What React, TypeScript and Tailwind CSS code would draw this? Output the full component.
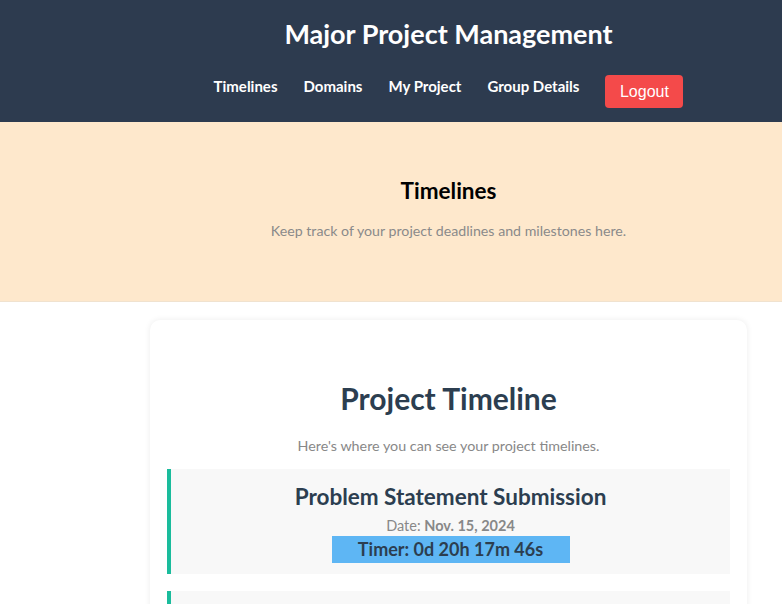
export default function App() {
  const font = { fontFamily: 'Lato, "Noto Sans", sans-serif' };
  return (
    <div className="w-[782px] h-[604px] overflow-hidden bg-white" style={font}>
      <div className="w-[897px]">
        <header className="bg-[#2d3b4f] h-[122px] flex flex-col items-center">
          <h1 className="text-[27px] font-bold text-white leading-none mt-[20px]">Major Project Management</h1>
          <nav className="flex items-center mt-[18px]">
            <a className="text-[15px] font-bold text-white mr-[26px]">Timelines</a>
            <a className="text-[15px] font-bold text-white mr-[26px]">Domains</a>
            <a className="text-[15px] font-bold text-white mr-[26px]">My Project</a>
            <a className="text-[15px] font-bold text-white mr-[26px]">Group Details</a>
            <button className="bg-[#f44a4a] text-white text-[16px] w-[78px] h-[33px] rounded-[4px] mt-[10px]" style={{ fontFamily: '"Liberation Sans", Arial, sans-serif' }}>Logout</button>
          </nav>
        </header>
        <section className="bg-[#fee8cc] h-[180px] flex flex-col items-center border-b border-[#f0e2cf]">
          <h2 className="text-[22.5px] font-bold text-black mt-[58px] leading-none">Timelines</h2>
          <p className="text-[14.2px] text-[#8a8a8a] mt-[17px]">Keep track of your project deadlines and milestones here.</p>
        </section>
        <main className="flex justify-center pt-[18px]">
          <div className="w-[597px] bg-white rounded-[10px] shadow-[0_0_6px_rgba(0,0,0,0.08)] px-[17px] pt-[63px] pb-[20px] flex flex-col items-center">
            <h2 className="text-[30px] font-bold text-[#2c3e50] leading-none">Project Timeline</h2>
            <p className="text-[14.3px] text-[#888] mt-[22px]">Here's where you can see your project timelines.</p>
            <div className="w-full mt-[13px] bg-[#f8f8f8] border-l-[4px] border-[#1abc9c] h-[105px] flex flex-col items-center">
              <h3 className="text-[22.5px] font-bold text-[#2c3e50] leading-none mt-[17px]">Problem Statement Submission</h3>
              <p className="text-[14.5px] text-[#888] mt-[7px] leading-[20px]">Date: <b className="font-bold">Nov. 15, 2024</b></p>
              <div className="w-[238px] h-[27px] bg-[#5eb6f4] flex items-center justify-center text-[18px] font-bold text-[#2c3e50]">Timer: 0d 20h 17m 46s</div>
            </div>
            <div className="w-full mt-[17px] bg-[#f8f8f8] border-l-[4px] border-[#1abc9c] h-[105px]"></div>
          </div>
        </main>
      </div>
    </div>
  );
}
